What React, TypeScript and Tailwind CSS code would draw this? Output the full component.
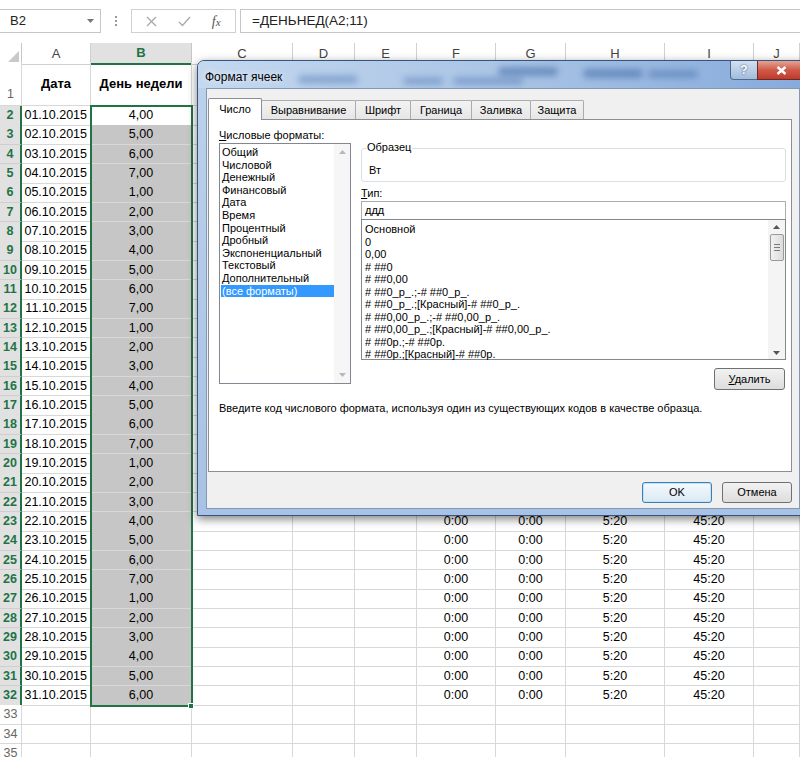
import React from "react";

const GRID =
  "grid grid-cols-[22px_69px_101px_101px_62px_62px_79px_70px_99px_89px_1fr]";
const CELL = "flex items-center border-r border-b border-[#d8d8d8] overflow-hidden whitespace-nowrap";
const UI = "font-['Liberation_Sans',Arial,sans-serif]";

const LEFT_FORMATS = [
  "Общий",
  "Числовой",
  "Денежный",
  "Финансовый",
  "Дата",
  "Время",
  "Процентный",
  "Дробный",
  "Экспоненциальный",
  "Текстовый",
  "Дополнительный",
  "(все форматы)",
];

const CODES = [
  "Основной",
  "0",
  "0,00",
  "# ##0",
  "# ##0,00",
  "# ##0_р_.;-# ##0_р_.",
  "# ##0_р_.;[Красный]-# ##0_р_.",
  "# ##0,00_р_.;-# ##0,00_р_.",
  "# ##0,00_р_.;[Красный]-# ##0,00_р_.",
  "# ##0р.;-# ##0р.",
  "# ##0р.;[Красный]-# ##0р.",
];

const TABS = [
  { label: "Число", w: "w-[54px]" },
  { label: "Выравнивание", w: "w-[95px]" },
  { label: "Шрифт", w: "w-[56px]" },
  { label: "Граница", w: "w-[62px]" },
  { label: "Заливка", w: "w-[60px]" },
  { label: "Защита", w: "w-[54px]" },
];

function Tri({ up, color }: { up?: boolean; color: string }) {
  return (
    <svg width="7" height="4" viewBox="0 0 7 4">
      <path d={up ? "M0 4L3.5 0L7 4Z" : "M0 0L3.5 4L7 0Z"} fill={color} />
    </svg>
  );
}

function SheetRow({ n }: { n: number }) {
  const data = n <= 32;
  // rows 2..22 of F:I sit under the dialog, only the visible ones are filled
  const times = n >= 23 && n <= 32;
  const i = n - 2;
  const date = data ? `${String(i + 1).padStart(2, "0")}.10.2015` : "";
  const val = data ? `${((i + 3) % 7) + 1},00` : "";
  return (
    <div className={`${GRID} h-[19.33px] text-[12.5px] text-black`}>
      {data ? (
        <div className="flex items-center justify-center bg-[#e1e1e1] border-b border-[#cfcfcf] border-r-2 border-r-[#217346] text-[#217346] font-bold">
          {n}
        </div>
      ) : (
        <div className="flex items-center justify-center bg-white border-b border-r border-[#d8d8d8] text-[#666]">
          {n}
        </div>
      )}
      <div className={`${CELL} justify-end pr-[3px]`}>{date}</div>
      <div className={`${CELL} justify-center ${data && n > 2 ? "bg-[#c6c6c6] border-[#b9b9b9]" : ""}`}>{val}</div>
      <div className={CELL} />
      <div className={CELL} />
      <div className={CELL} />
      <div className={`${CELL} justify-center`}>{times ? "0:00" : ""}</div>
      <div className={`${CELL} justify-center`}>{times ? "0:00" : ""}</div>
      <div className={`${CELL} justify-center`}>{times ? "5:20" : ""}</div>
      <div className={`${CELL} justify-center`}>{times ? "45:20" : ""}</div>
      <div className={CELL} />
    </div>
  );
}

function FormulaBar() {
  return (
    <div className="h-[43px] pt-[9px] flex items-start">
      <div className="w-[101px] h-[24px] border-y border-r border-[#c6c6c6] flex items-center justify-between pl-[10px] pr-[6px] text-[13px] text-[#222]">
        <span>B2</span>
        <Tri color="#777" />
      </div>
      <div className="w-[30px] h-[24px] flex flex-col items-center justify-center gap-[2px]">
        <span className="w-[2px] h-[2px] bg-[#9a9a9a]" />
        <span className="w-[2px] h-[2px] bg-[#9a9a9a]" />
        <span className="w-[2px] h-[2px] bg-[#9a9a9a]" />
      </div>
      <div className="w-[105px] h-[24px] border border-[#d0d0d0] flex items-center justify-around px-[4px]">
        <svg width="11" height="11" viewBox="0 0 11 11">
          <path d="M1 1L10 10M10 1L1 10" stroke="#a8a8a8" strokeWidth="1.3" />
        </svg>
        <svg width="13" height="11" viewBox="0 0 13 11">
          <path d="M1 6L4.5 9.5L12 1" stroke="#a8a8a8" strokeWidth="1.3" fill="none" />
        </svg>
        <span className="font-['Liberation_Serif',serif] italic text-[14px] text-[#555]">
          f<span className="text-[11px]">x</span>
        </span>
      </div>
      <div className="ml-[4px] flex-1 h-[24px] border-y border-l border-[#c6c6c6] flex items-center pl-[11px] text-[13.5px] text-[#222]">
        =ДЕНЬНЕД(A2;11)
      </div>
    </div>
  );
}

function ColumnHeaders() {
  const letters = ["A", "B", "C", "D", "E", "F", "G", "H", "I", "J"];
  return (
    <div className={`${GRID} h-[19px] text-[13px] text-[#444]`}>
      <div className="border-r border-b border-[#c6c6c6] bg-white flex items-end justify-end p-[2px]">
        <svg width="11" height="11" viewBox="0 0 11 11">
          <path d="M11 0L11 11L0 11Z" fill="#c9c9c9" />
        </svg>
      </div>
      {letters.map((l) =>
        l === "B" ? (
          <div
            key={l}
            className="flex items-center justify-center bg-[#e1e1e1] border-r border-[#c6c6c6] border-b-2 border-b-[#217346] text-[#217346] font-bold"
          >
            {l}
          </div>
        ) : (
          <div
            key={l}
            className="flex items-center justify-center bg-white border-r border-b border-[#d0d0d0]"
          >
            {l}
          </div>
        )
      )}
    </div>
  );
}

function Dialog() {
  return (
    <div
      className={`absolute left-[197px] top-[60px] w-[612px] h-[456px] rounded-t-[7px] border border-[#34557f] bg-linear-to-b from-[#bcd2ec] to-[#a7c2e4] shadow-[0_3px_10px_rgba(0,0,0,0.5)] flex flex-col ${UI}`}
    >
      <div className="relative h-[27px] overflow-hidden rounded-t-[6px] bg-linear-to-r from-[#c4d8ef] via-[#aac4e5] to-[#86aadb]">
        <div className="absolute left-[100px] top-[14px] w-[60px] h-[9px] rounded-full bg-[#4f7ab4]/45 blur-[3px]" />
        <div className="absolute left-[205px] top-[16px] w-[40px] h-[8px] rounded-full bg-[#4f7ab4]/45 blur-[3px]" />
        <div className="absolute left-[255px] top-[16px] w-[70px] h-[8px] rounded-full bg-[#4f7ab4]/45 blur-[3px]" />
        <div className="absolute left-[300px] top-[6px] w-[60px] h-[9px] rounded-full bg-[#3f6aa6]/55 blur-[3px]" />
        <div className="absolute left-[385px] top-[8px] w-[60px] h-[9px] rounded-full bg-[#3f6aa6]/55 blur-[3px]" />
        <div className="absolute left-[450px] top-[9px] w-[50px] h-[8px] rounded-full bg-[#3f6aa6]/45 blur-[3px]" />
        <div className="relative pl-[7px] pt-[7px] text-[12px] text-black [text-shadow:0_0_6px_#fff]">
          Формат ячеек
        </div>
        <div className="absolute left-[532px] top-0 w-[28px] h-[19px] rounded-bl-[4px] border border-t-0 border-[#4e6a8e] bg-linear-to-b from-[#d2e0f0] to-[#a3bcdc] flex items-center justify-center text-[12px] font-bold text-white [text-shadow:0_0_2px_#2a4466]">
          ?
        </div>
        <div className="absolute left-[559px] top-0 w-[48px] h-[19px] rounded-br-[4px] border border-t-0 border-[#6b2a22] bg-linear-to-b from-[#e4a293] via-[#cf5a49] to-[#c0392b] flex items-center justify-center">
          <svg width="11" height="9" viewBox="0 0 11 9">
            <path d="M1.5 1L9.5 8M9.5 1L1.5 8" stroke="#fff" strokeWidth="2.4" />
          </svg>
        </div>
      </div>

      <div className="flex-1 mx-[8px] mb-[6px] bg-[#f0f0f0] border border-[#8198b6] text-[11px] text-black">
        <div className="pl-[1px] pt-[8px] flex items-end h-[30px]">
          {TABS.map((t, idx) =>
            idx === 0 ? (
              <div
                key={t.label}
                className={`${t.w} h-[22px] relative z-10 -mb-px bg-white border border-b-0 border-[#8c8e94] rounded-t-[2px] flex items-center justify-center`}
              >
                {t.label}
              </div>
            ) : (
              <div
                key={t.label}
                className={`${t.w} h-[19px] -ml-px border border-b-0 border-[#acacac] rounded-t-[2px] bg-linear-to-b from-[#f3f3f3] to-[#e6e6e6] flex items-center justify-center`}
              >
                {t.label}
              </div>
            )
          )}
        </div>

        <div className="ml-[1px] w-[584px] h-[353px] bg-white border border-[#8c8e94] pl-[10px] pt-[8px]">
          <div className="flex gap-[10px]">
            <div className="w-[132px]">
              <div className="h-[15px] leading-[15px]">
                <span className="underline">Ч</span>исловые форматы:
              </div>
              <div className="h-[241px] border border-[#828790] flex">
                <div className="flex-1 pt-[2px] pl-[1px]">
                  {LEFT_FORMATS.map((f, idx) => (
                    <div
                      key={f}
                      className={`h-[12.6px] leading-[12.6px] pl-[1px] whitespace-nowrap ${
                        idx === LEFT_FORMATS.length - 1 ? "bg-[#3399ff] text-white" : ""
                      }`}
                    >
                      {f}
                    </div>
                  ))}
                </div>
                <div className="w-[16px] bg-[#f6f6f6] flex flex-col justify-between items-center py-[6px]">
                  <Tri up color="#b8b8b8" />
                  <Tri color="#b8b8b8" />
                </div>
              </div>
            </div>

            <div className="w-[425px]">
              <div className="relative mt-[20px] h-[34px] rounded-[3px] border border-[#d5dfe5]">
                <span className="absolute -top-[8px] left-[4px] bg-white px-[1px] leading-[13px]">
                  Образец
                </span>
                <div className="pl-[7px] pt-[15px] leading-[13px]">Вт</div>
              </div>
              <div className="mt-[3px] h-[16px] leading-[16px]">
                <span className="underline">Т</span>ип:
              </div>
              <div className="h-[19px] border border-[#abadb3] pl-[3px] leading-[17px]">ддд</div>
              <div className="-mt-px h-[141px] border border-[#828790] flex">
                <div className="flex-1 pt-[3px] pl-[3px]">
                  {CODES.map((c) => (
                    <div key={c} className="h-[12.5px] leading-[12.5px] whitespace-nowrap">
                      {c}
                    </div>
                  ))}
                </div>
                <div className="w-[17px] bg-[#f4f4f4] flex flex-col items-center pt-[5px] pb-[4px]">
                  <Tri up color="#555" />
                  <div className="mt-[5px] w-[14px] h-[27px] rounded-[2px] border border-[#9a9a9a] bg-linear-to-r from-[#f1f1f1] to-[#dcdcdc] flex flex-col items-center justify-center gap-[2px]">
                    <span className="w-[6px] h-px bg-[#7a7a7a]" />
                    <span className="w-[6px] h-px bg-[#7a7a7a]" />
                    <span className="w-[6px] h-px bg-[#7a7a7a]" />
                  </div>
                  <div className="flex-1" />
                  <Tri color="#555" />
                </div>
              </div>
              <div className="mt-[8px] flex justify-end pr-[1px]">
                <div className="w-[71px] h-[22px] rounded-[3px] border border-[#707070] bg-linear-to-b from-[#f2f2f2] to-[#dddddd] flex items-center justify-center">
                  <span>
                    <span className="underline">У</span>далить
                  </span>
                </div>
              </div>
            </div>
          </div>
          <div className="mt-[12px] leading-[13px]">
            Введите код числового формата, используя один из существующих кодов в качестве образца.
          </div>
        </div>

        <div className="ml-[1px] w-[584px] mt-[10px] flex justify-end gap-[10px]">
          <div className="w-[70px] h-[21px] rounded-[3px] border border-[#3c7fb1] bg-linear-to-b from-[#f4f9fd] to-[#dbe9f4] shadow-[inset_0_0_0_1px_#bfe3f8] flex items-center justify-center">
            OK
          </div>
          <div className="w-[70px] h-[21px] rounded-[3px] border border-[#707070] bg-linear-to-b from-[#f2f2f2] to-[#dddddd] flex items-center justify-center">
            Отмена
          </div>
        </div>
      </div>
    </div>
  );
}

export default function App() {
  const rows = Array.from({ length: 34 }, (_, k) => k + 2);
  return (
    <div className={`relative w-[800px] h-[757px] overflow-hidden bg-white ${UI}`}>
      <FormulaBar />
      <ColumnHeaders />
      <div className={`${GRID} h-[44px]`}>
        <div className="flex items-end justify-center pb-[1px] bg-white border-r border-b border-[#d8d8d8] text-[12.5px] text-[#666]">
          1
        </div>
        <div className={`${CELL} justify-center font-bold text-[13px]`}>Дата</div>
        <div className={`${CELL} justify-center font-bold text-[13px]`}>День недели</div>
        <div className={CELL} />
        <div className={CELL} />
        <div className={CELL} />
        <div className={CELL} />
        <div className={CELL} />
        <div className={CELL} />
        <div className={CELL} />
        <div className={CELL} />
      </div>
      {rows.map((n) => (
        <SheetRow key={n} n={n} />
      ))}

      {/* selection outline over B2:B32 */}
      <div className="absolute left-[90px] top-[105px] w-[103px] h-[602px] border-2 border-[#217346] pointer-events-none" />
      <div className="absolute left-[188px] top-[703px] w-[6px] h-[6px] bg-[#217346] border border-white" />

      <Dialog />
    </div>
  );
}
